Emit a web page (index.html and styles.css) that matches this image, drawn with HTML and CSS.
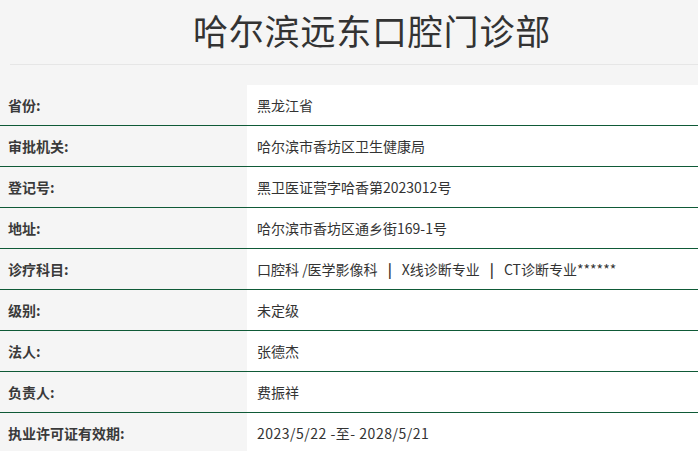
FILE: index.html
```html
<!DOCTYPE html>
<html lang="zh-CN">
<head>
<meta charset="utf-8">
<title>哈尔滨远东口腔门诊部</title>
<link rel="stylesheet" href="styles.css">
</head>
<body>
<div class="page">
  <header class="header">
    <h1 class="title">哈尔滨远东口腔门诊部</h1>
  </header>
  <div class="rule"></div>
  <div class="table">
    <div class="row"><div class="label">省份:</div><div class="value">黑龙江省</div></div>
    <div class="row"><div class="label">审批机关:</div><div class="value">哈尔滨市香坊区卫生健康局</div></div>
    <div class="row"><div class="label">登记号:</div><div class="value">黑卫医证营字哈香第2023012号</div></div>
    <div class="row"><div class="label">地址:</div><div class="value">哈尔滨市香坊区通乡街169-1号</div></div>
    <div class="row"><div class="label">诊疗科目:</div><div class="value">口腔科 /医学影像科<span class="sep">|</span>X线诊断专业<span class="sep">|</span>CT诊断专业******</div></div>
    <div class="row"><div class="label">级别:</div><div class="value">未定级</div></div>
    <div class="row"><div class="label">法人:</div><div class="value">张德杰</div></div>
    <div class="row"><div class="label">负责人:</div><div class="value">费振祥</div></div>
    <div class="row last"><div class="label">执业许可证有效期:</div><div class="value num">2023/5/22 -至- 2028/5/21</div></div>
  </div>
</div>
</body>
</html>
```
FILE: styles.css
```css
html, body {
  margin: 0;
  padding: 0;
  background: #f5f5f5;
}
body {
  font-family: "Noto Sans CJK SC", "Noto Sans", sans-serif;
  color: #333;
}
.header {
  height: 64px;
  display: flex;
  align-items: center;
  justify-content: center;
  padding-left: 46px;
}
.title {
  margin: 0;
  font-size: 35px;
  font-weight: 400;
  line-height: 1;
  color: #333;
  letter-spacing: 0.8px;
  position: relative;
  top: -3px;
}
.rule {
  margin-left: 10px;
  height: 1px;
  background: #e6e6e6;
}
.table {
  margin-top: 20px;
}
.row {
  display: grid;
  grid-template-columns: 247px 1fr;
  height: 40px;
  border-bottom: 1px solid #0f5a37;
}
.row.last {
  border-bottom: none;
}
.label {
  display: flex;
  align-items: center;
  padding-left: 8px;
  font-size: 14px;
  font-weight: 700;
  color: #3a3a3a;
  background: #f5f5f5;
}
.value {
  display: flex;
  align-items: center;
  padding-left: 10px;
  font-size: 14px;
  color: #333;
  background: #fff;
  white-space: pre;
}
.value.num {
  letter-spacing: 0.5px;
}
.sep {
  padding: 0 10px;
  font-weight: 700;
}
```
